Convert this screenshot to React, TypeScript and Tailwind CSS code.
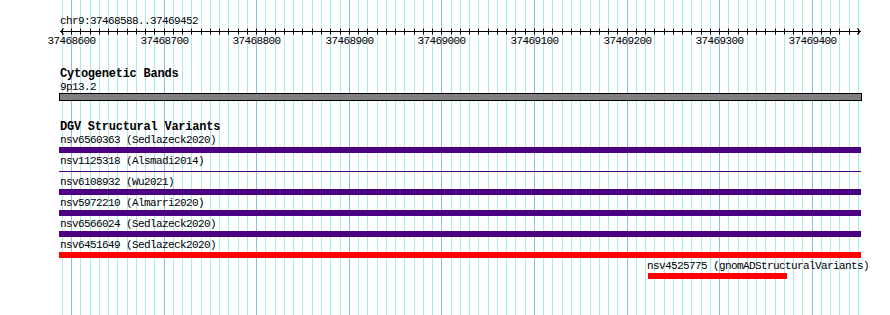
import React from "react";

const PX = 0.9259;
const xOf = (bp: number) => 71 + (bp - 37468600) * PX;

const gridStops: number[] = [];
for (let bp = 37468590; bp <= 37469450; bp += 10) gridStops.push(bp);
const majors = gridStops.filter((bp) => bp % 100 === 0);

interface Variant {
  id: string;
  source: string;
  kind: "bar" | "line";
  color: string;
}

const variants: Variant[] = [
  { id: "nsv6560363", source: "Sedlazeck2020", kind: "bar", color: "bg-[#4b0082]" },
  { id: "nsv1125318", source: "Alsmadi2014", kind: "line", color: "bg-[#4b0082]" },
  { id: "nsv6108932", source: "Wu2021", kind: "bar", color: "bg-[#4b0082]" },
  { id: "nsv5972210", source: "Almarri2020", kind: "bar", color: "bg-[#4b0082]" },
  { id: "nsv6566024", source: "Sedlazeck2020", kind: "bar", color: "bg-[#4b0082]" },
  { id: "nsv6451649", source: "Sedlazeck2020", kind: "bar", color: "bg-[#ff0000]" },
];

const Ruler: React.FC = () => (
  <svg width={890} height={20} className="block">
    <line x1={60} y1={4.5} x2={861} y2={4.5} stroke="#000" strokeWidth={1} />
    <polyline points="64,1.5 60.5,4.5 64,7.5" fill="none" stroke="#000" strokeWidth={1} />
    <polyline points="857,1.5 860.5,4.5 857,7.5" fill="none" stroke="#000" strokeWidth={1} />
    {gridStops.map((bp) => (
      <line
        key={bp}
        x1={Math.round(xOf(bp)) + 0.5}
        y1={1.5}
        x2={Math.round(xOf(bp)) + 0.5}
        y2={7.5}
        stroke="#000"
        strokeWidth={1}
      />
    ))}
    {majors.map((bp) => (
      <text
        key={bp}
        x={Math.round(xOf(bp)) + 0.5}
        y={17}
        textAnchor="middle"
        fontFamily="'Liberation Mono', monospace"
        fontSize={11}
        letterSpacing={-0.6}
        fill="#000"
      >
        {bp}
      </text>
    ))}
  </svg>
);

const Label: React.FC<{ children: React.ReactNode }> = ({ children }) => (
  <div className="h-[12px] text-[11px] leading-[12px] tracking-[-0.6px] text-black whitespace-nowrap">
    {children}
  </div>
);

const Title: React.FC<{ children: React.ReactNode }> = ({ children }) => (
  <div className="h-[13px] text-[12px] leading-[13px] font-bold tracking-[-0.24px] text-black whitespace-nowrap">
    {children}
  </div>
);

export default function App() {
  return (
    <div className="relative w-[890px] h-[315px] overflow-hidden bg-white font-['Liberation_Mono',monospace]">
      {gridStops.map((bp) => (
        <div
          key={bp}
          className={`absolute top-0 h-[315px] w-px ${bp % 100 === 0 ? "bg-[#8cbfe8]" : "bg-[#aeeaea]"}`}
          style={{ left: Math.round(xOf(bp)) }}
        />
      ))}

      <div className="relative flex flex-col">
        <div className="pl-[60px] pt-[15px]">
          <Label>chr9:37468588..37469452</Label>
        </div>
        <Ruler />

        <div className="pl-[60px] mt-[21px]">
          <Title>Cytogenetic Bands</Title>
          <Label>9p13.2</Label>
        </div>
        <div className="ml-[59px] w-[803px] h-[8px] border border-black bg-[#808080]" />

        <div className="pl-[60px] mt-[20px]">
          <Title>DGV Structural Variants</Title>
        </div>

        <div className="flex flex-col">
          {variants.map((v) => (
            <div key={v.id} className="h-[21px] flex flex-col">
              <div className="pl-[60px]">
                <Label>
                  {v.id} ({v.source})
                </Label>
              </div>
              <div className="ml-[59px] w-[802px] h-[6px] mt-[1px] flex items-center">
                {v.kind === "bar" ? (
                  <div className={`w-full h-[6px] ${v.color}`} />
                ) : (
                  <div className={`w-full h-px ${v.color}`} />
                )}
              </div>
            </div>
          ))}
          <div className="h-[21px] flex flex-col">
            <div className="pl-[647px]">
              <Label>nsv4525775 (gnomADStructuralVariants)</Label>
            </div>
            <div className="ml-[648px] w-[139px] h-[6px] mt-[1px] bg-[#ff0000]" />
          </div>
        </div>
      </div>
    </div>
  );
}
